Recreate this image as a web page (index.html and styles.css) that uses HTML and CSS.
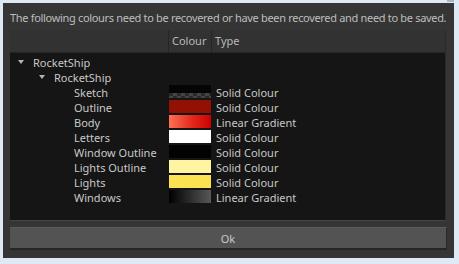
FILE: index.html
```html
<!DOCTYPE html>
<html lang="en">
<head>
  <meta charset="UTF-8">
  <title>Recover Colours</title>
  <link rel="stylesheet" href="styles.css">
</head>
<body>
  <div class="chrome-tab"></div>
  <div class="dialog">
    <p class="message">The following colours need to be recovered or have been recovered and need to be saved.</p>
    <div class="tree">
      <div class="tree-header">
        <div class="col-name"></div>
        <div class="col-colour">Colour</div>
        <div class="col-type">Type</div>
      </div>
      <div class="tree-body">
        <div class="row level-1">
          <div class="name"><span class="arrow"></span>RocketShip</div>
        </div>
        <div class="row level-2">
          <div class="name"><span class="arrow"></span>RocketShip</div>
        </div>
        <div class="row level-3">
          <div class="name">Sketch</div>
          <div class="swatch swatch-sketch"></div>
          <div class="type">Solid Colour</div>
        </div>
        <div class="row level-3">
          <div class="name">Outline</div>
          <div class="swatch swatch-outline"></div>
          <div class="type">Solid Colour</div>
        </div>
        <div class="row level-3">
          <div class="name">Body</div>
          <div class="swatch swatch-body"></div>
          <div class="type">Linear Gradient</div>
        </div>
        <div class="row level-3">
          <div class="name">Letters</div>
          <div class="swatch swatch-letters"></div>
          <div class="type">Solid Colour</div>
        </div>
        <div class="row level-3">
          <div class="name">Window Outline</div>
          <div class="swatch swatch-window-outline"></div>
          <div class="type">Solid Colour</div>
        </div>
        <div class="row level-3">
          <div class="name">Lights Outline</div>
          <div class="swatch swatch-lights-outline"></div>
          <div class="type">Solid Colour</div>
        </div>
        <div class="row level-3">
          <div class="name">Lights</div>
          <div class="swatch swatch-lights"></div>
          <div class="type">Solid Colour</div>
        </div>
        <div class="row level-3">
          <div class="name">Windows</div>
          <div class="swatch swatch-windows"></div>
          <div class="type">Linear Gradient</div>
        </div>
      </div>
    </div>
    <button class="ok-button">Ok</button>
  </div>
</body>
</html>
```

FILE: styles.css
```css
body {
  margin: 0;
  width: 459px;
  height: 264px;
  background-color: #dfe9f5;
  font-family: "Noto Sans", "Open Sans", sans-serif;
  font-size: 11px;
  color: #c4c4c4;
  overflow: hidden;
  position: relative;
}

.chrome-tab {
  position: absolute;
  top: 0;
  left: 447px;
  width: 7px;
  height: 2px;
  background-color: #a9b4c4;
}

.dialog {
  margin: 3px 5px 0 3px;
  height: 255px;
  background-color: #353535;
  padding: 7px 7px 0 7px;
  box-sizing: border-box;
  display: flex;
  flex-direction: column;
}

.message {
  margin: 0 0 4px 0;
  line-height: 16px;
  color: #bdbdbd;
  white-space: nowrap;
  letter-spacing: -0.32px;
}

.tree {
  width: 436px;
  height: 191px;
  background-color: #151515;
  border-right: 1px solid #2a2a2a;
  border-bottom: 1px solid #444;
  box-sizing: border-box;
  display: flex;
  flex-direction: column;
}

.tree-header {
  display: grid;
  grid-template-columns: 159px 43px 1fr;
  height: 23px;
  background-color: #323232;
  border-bottom: 1px solid #262626;
  box-sizing: border-box;
  line-height: 22px;
  color: #b9b9b9;
}

.col-name,
.col-colour {
  border-right: 1px solid #262626;
}

.col-colour,
.col-type {
  padding-left: 3px;
}

.tree-body {
  padding-top: 2px;
}

.row {
  display: grid;
  grid-template-columns: 159px 43px 1fr;
  height: 15px;
  line-height: 15px;
  color: #c8c8c8;
}

.name {
  display: flex;
  align-items: center;
  white-space: nowrap;
}

.level-1 .name {
  padding-left: 8px;
}

.level-2 .name {
  padding-left: 29px;
}

.level-3 .name {
  padding-left: 64px;
}

.arrow {
  width: 0;
  height: 0;
  border-left: 3.5px solid transparent;
  border-right: 3.5px solid transparent;
  border-top: 4px solid #b4b4b4;
  margin-right: 9px;
  margin-top: -1px;
}

.swatch {
  width: 42px;
  height: 13px;
}

.type {
  padding-left: 4px;
  white-space: nowrap;
}

.swatch-sketch {
  background-color: #050505;
  background-image:
    repeating-linear-gradient(to right, #2a2a2a 0 4px, #444 4px 8px),
    repeating-linear-gradient(to right, #444 0 4px, #2a2a2a 4px 8px);
  background-size: 100% 3px, 100% 2px;
  background-position: 0 8px, 0 11px;
  background-repeat: no-repeat;
}

.swatch-outline {
  background-color: #931104;
}

.swatch-body {
  background: linear-gradient(to right, #ff7152, #e2291d 55%, #cc0000);
}

.swatch-letters {
  background-color: #ffffff;
}

.swatch-window-outline {
  background-color: #030303;
}

.swatch-lights-outline {
  background-color: #fff4a2;
}

.swatch-lights {
  background-color: #fbe252;
}

.swatch-windows {
  background: linear-gradient(to right, #000000, #585858);
}

.ok-button {
  margin-top: 6px;
  width: 437px;
  height: 23px;
  background-color: #535353;
  color: #c8c8c8;
  font-family: inherit;
  font-size: 11px;
  border: none;
  border-top: 1px solid #5c5c5c;
  border-bottom: 2px solid #262626;
  border-right: 1px solid #2a2a2a;
  padding: 0;
}
```
